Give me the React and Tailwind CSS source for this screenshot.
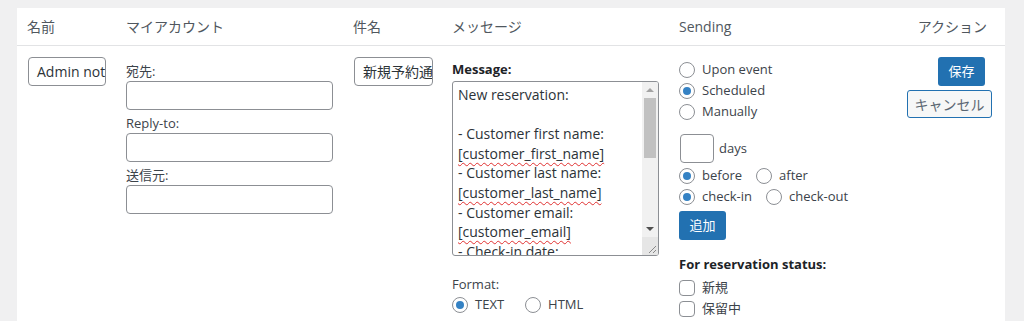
import React from 'react';

const font = { fontFamily: '"Open Sans", "Noto Sans CJK JP", sans-serif' };

function Radio({ checked, label, className = '' }) {
  return (
    <label className={`flex items-center h-[21px] ${className}`}>
      <span className="w-4 h-4 rounded-full border border-[#8c8f94] bg-white flex items-center justify-center shrink-0">
        {checked && <span className="w-2 h-2 rounded-full bg-[#3582c4]"></span>}
      </span>
      <span className="ml-[7px] text-[13px] text-[#3c434a] whitespace-nowrap">{label}</span>
    </label>
  );
}

function Check({ label }) {
  return (
    <label className="flex items-center h-[21px]">
      <span className="w-4 h-4 rounded-[4px] border border-[#8c8f94] bg-white shrink-0"></span>
      <span className="ml-[7px] text-[13px] text-[#3c434a]">{label}</span>
    </label>
  );
}

function Input({ value = '', className = '' }) {
  return (
    <div className={`h-[29px] border border-[#8c8f94] rounded-[4px] bg-white px-[8px] flex items-center overflow-hidden whitespace-nowrap text-[14px] text-[#2c3338] ${className}`}>
      {value}
    </div>
  );
}

const Tok = ({ children }) => (
  <span className="underline decoration-wavy decoration-[#e03030] decoration-1 underline-offset-[3px]">{children}</span>
);

function MessageBox() {
  const lines = [
    'New reservation:',
    '\u00a0',
    '- Customer first name:',
    <Tok>[customer_first_name]</Tok>,
    '- Customer last name:',
    <Tok>[customer_last_name]</Tok>,
    '- Customer email:',
    <Tok>[customer_email]</Tok>,
    '- Check-in date:',
  ];
  return (
    <div className="relative h-[175px] w-[207px] border border-[#8c8f94] rounded-[3px] bg-white overflow-hidden">
      <div className="pl-[5px] pt-[3px] pr-[20px] text-[14px] leading-[19.6px] text-[#2c3338] whitespace-nowrap">
        {lines.map((l, i) => (
          <div key={i}>{l}</div>
        ))}
      </div>
      {/* scrollbar */}
      <div className="absolute right-0 top-0 bottom-0 w-[16px] bg-[#f1f1f1] flex flex-col items-center">
        <div className="h-[16px] flex items-center justify-center">
          <span className="w-0 h-0 border-l-[4px] border-r-[4px] border-b-[4px] border-l-transparent border-r-transparent border-b-[#a3a3a3]"></span>
        </div>
        <div className="w-[12px] h-[60px] bg-[#c1c1c1]"></div>
        <div className="flex-1"></div>
        <div className="h-[16px] flex items-center justify-center">
          <span className="w-0 h-0 border-l-[4px] border-r-[4px] border-t-[4px] border-l-transparent border-r-transparent border-t-[#505050]"></span>
        </div>
        <div className="h-[18px] w-[16px] bg-[#e6e6e6] relative">
          <svg className="absolute right-[1px] bottom-[1px]" width="10" height="10" viewBox="0 0 10 10">
            <path d="M9 2 L2 9 M9 6 L6 9" stroke="#888" strokeWidth="1" />
          </svg>
        </div>
      </div>
    </div>
  );
}

export default function App() {
  return (
    <div className="min-h-[321px] bg-[#f0f0f1] pt-[8px] pl-[17px] pr-[19px]" style={font}>
      <div className="bg-white h-[313px]">
        {/* header */}
        <div className="grid grid-cols-[99px_227px_99px_227px_1fr_120px] h-[38px] items-center border-b border-[#e2e3e5] text-[14px] text-[#50575e]">
          <div className="pl-[10px]">名前</div>
          <div className="pl-[10px]">マイアカウント</div>
          <div className="pl-[10px]">件名</div>
          <div className="pl-[10px]">メッセージ</div>
          <div className="pl-[10px]">Sending</div>
          <div className="text-right pr-[18px]">アクション</div>
        </div>

        {/* row */}
        <div className="grid grid-cols-[99px_227px_99px_227px_1fr_120px] text-[13px] text-[#3c434a]">
          <div className="pl-[11px] pr-[10px] pt-[11px]">
            <Input value="Admin notification" className="w-[78px]" />
          </div>

          <div className="pl-[10px] pt-[15px]">
            <div className="h-[20px] leading-[20px]">宛先:</div>
            <Input className="w-[207px]" />
            <div className="h-[20px] leading-[20px] mt-[3px]">Reply-to:</div>
            <Input className="w-[207px]" />
            <div className="h-[20px] leading-[20px] mt-[3px]">送信元:</div>
            <Input className="w-[207px]" />
          </div>

          <div className="pl-[11px] pt-[11px]">
            <Input value="新規予約通知" className="w-[79px]" />
          </div>

          <div className="pl-[10px] pt-[13px]">
            <div className="h-[20px] leading-[20px] font-bold text-[#1d2327]">Message:</div>
            <div className="mt-[2px]">
              <MessageBox />
            </div>
            <div className="mt-[18px] h-[20px] leading-[20px]">Format:</div>
            <div className="flex">
              <Radio checked label="TEXT" />
              <Radio label="HTML" className="ml-[21px]" />
            </div>
          </div>

          <div className="pl-[10px] pt-[13px]">
            <Radio label="Upon event" />
            <Radio checked label="Scheduled" />
            <Radio label="Manually" />
            <div className="flex items-center mt-[12px]">
              <div className="w-[34px] h-[29px] border border-[#8c8f94] rounded-[4px] bg-white ml-[1px]"></div>
              <span className="ml-[5px]">days</span>
            </div>
            <div className="flex mt-[2px]">
              <Radio checked label="before" />
              <Radio label="after" className="ml-[14px]" />
            </div>
            <div className="flex">
              <Radio checked label="check-in" />
              <Radio label="check-out" className="ml-[14px]" />
            </div>
            <button className="mt-[4px] w-[47px] h-[29px] rounded-[3px] bg-[#2271b1] text-white text-[13px]">追加</button>
            <div className="mt-[14px] h-[20px] leading-[20px] font-bold text-[#1d2327]">For reservation status:</div>
            <div className="mt-[3px]">
              <Check label="新規" />
              <Check label="保留中" />
            </div>
          </div>

          <div className="pt-[11px] flex flex-col items-end pr-[13px]">
            <button className="w-[47px] h-[29px] mr-[7px] rounded-[3px] bg-[#2271b1] text-white text-[13px]">保存</button>
            <button className="mt-[4px] w-[85px] h-[28px] rounded-[3px] border border-[#2271b1] bg-[#f6f7f7] text-[#5b6773] text-[14px]">キャンセル</button>
          </div>
        </div>
      </div>
    </div>
  );
}
